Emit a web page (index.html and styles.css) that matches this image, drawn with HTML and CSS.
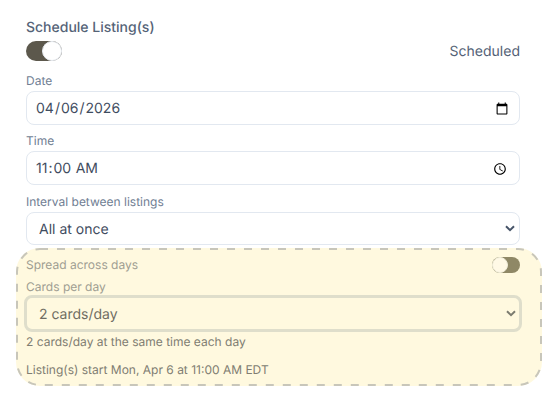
FILE: index.html
```html
<!DOCTYPE html>
<html lang="en">
<head>
<meta charset="utf-8">
<title>Schedule Listing(s)</title>
<link rel="stylesheet" href="styles.css">
</head>
<body>
<form class="form">
  <div class="title">Schedule Listing(s)</div>
  <div class="switch-row">
    <span class="switch on"><span class="knob"></span></span>
    <span class="status">Scheduled</span>
  </div>
  <div class="field first">
    <label class="label" for="d">Date</label>
    <input class="control" id="d" type="date" value="2026-04-06">
  </div>
  <div class="field">
    <label class="label" for="t">Time</label>
    <input class="control" id="t" type="time" value="11:00">
  </div>
  <div class="field last">
    <label class="label" for="i">Interval between listings</label>
    <select class="control select" id="i"><option>All at once</option></select>
  </div>
  <div class="spread">
    <svg class="dashes" aria-hidden="true"><rect class="dash-rect" x="1" y="1" rx="23" ry="23"></rect></svg>
    <div class="spread-head">
      <span class="label flush">Spread across days</span>
      <span class="switch small"><span class="knob"></span></span>
    </div>
    <label class="label flush" for="c">Cards per day</label>
    <select class="control select ring" id="c"><option>2 cards/day</option></select>
    <div class="hint">2 cards/day at the same time each day</div>
    <div class="hint start">Listing(s) start Mon, Apr 6 at 11:00 AM EDT</div>
  </div>
</form>
</body>
</html>
```
FILE: styles.css
```css
* { box-sizing: border-box; }
html, body { margin: 0; background: #fff; }
body { font-family: Inter, "Liberation Sans", sans-serif; color: #334155; overflow: hidden; text-rendering: geometricPrecision; -webkit-font-smoothing: antialiased; }
.form { padding: 18px 34px 0 26px; display: flex; flex-direction: column; }
.title { font-size: 14px; font-weight: 500; line-height: 20px; color: #556377; }
.switch-row { display: flex; justify-content: space-between; align-items: center; height: 20px; margin-top: 3px; }
.status { font-size: 14px; color: #536176; }
.switch { display: flex; width: 36px; height: 20px; border-radius: 10px; background: #5c584c; }
.switch.on { justify-content: flex-end; }
.knob { width: 20px; height: 20px; border-radius: 50%; background: #fff; border: 1px solid #e8ecf2; }
.switch.small { width: 28px; height: 16px; border-radius: 8px; background: #8f8866; }
.switch.small .knob { width: 16px; height: 16px; background: #fff9e6; border-color: #f0edda; }
.field { display: flex; flex-direction: column; margin-top: 8px; }
.field.first { margin-top: 12px; }
.field.last { margin-top: 9px; }
.field.last .control { height: 33px; }
.label { display: block; font-size: 12px; line-height: 16px; color: #707e93; margin-bottom: 2px; }
.label.flush { margin: 0; }
.control { width: 100%; height: 34px; border: 1px solid #e2e8f0; border-radius: 8px; background: #fff; padding: 2px 8px 0; font: 400 14px/20px Inter, sans-serif; color: #3f4c60; outline: none; text-rendering: geometricPrecision; }
.select { appearance: none; -webkit-appearance: none; padding-left: 12px; background-image: url("data:image/svg+xml,%3Csvg xmlns='http://www.w3.org/2000/svg' width='10' height='7'%3E%3Cpath d='M1 1.2l4 4 4-4' fill='none' stroke='%23475569' stroke-width='2'/%3E%3C/svg%3E"); background-repeat: no-repeat; background-position: right 4px center; }
.spread { position: relative; height: 138px; margin: 3px -22px 0 -10px; padding: 9px 22px 0 10px; border-radius: 24px; background: #fff9df; }
.dashes { position: absolute; inset: 0; width: 100%; height: 100%; pointer-events: none; }
.dash-rect { width: calc(100% - 2px); height: calc(100% - 2px); fill: none; stroke: #c8c6ba; stroke-width: 2; stroke-dasharray: 8 9; }
.spread .label { color: #a09e92; }
.spread-head { display: flex; justify-content: space-between; align-items: center; height: 16px; margin-bottom: 6px; }
.ring { height: 37px; margin: 0 -2px; width: calc(100% + 4px); padding-left: 12px; border: 3px solid #dfdecb; background-color: transparent; background-image: url("data:image/svg+xml,%3Csvg xmlns='http://www.w3.org/2000/svg' width='10' height='7'%3E%3Cpath d='M1 1.2l4 4 4-4' fill='none' stroke='%237c7c70' stroke-width='2'/%3E%3C/svg%3E"); background-position: right 3px center; color: #6f6d62; }
.hint { font-size: 12px; line-height: 16px; color: #807d72; margin-top: 2px; }
.hint.start { margin-top: 12px; }
```
